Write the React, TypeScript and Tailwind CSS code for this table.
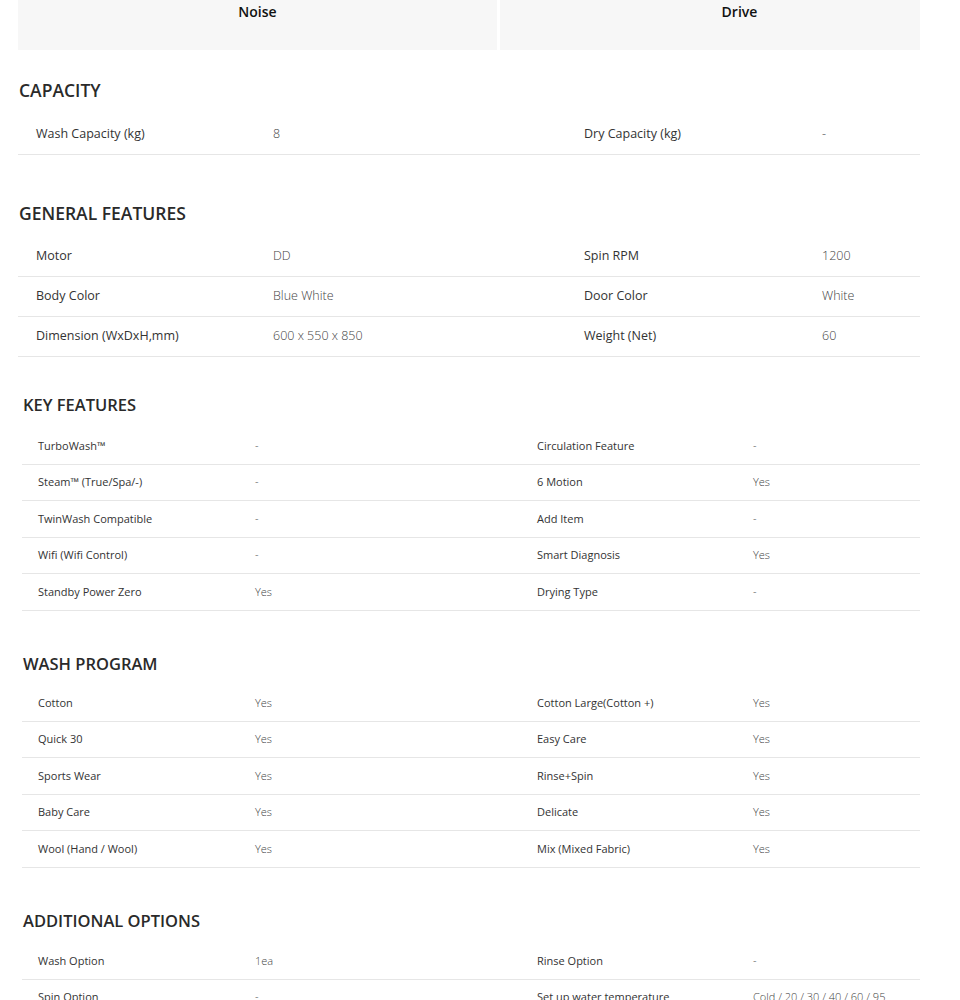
import React from 'react';

type Row = [string, string, string, string];

const capacity: Row[] = [['Wash Capacity (kg)', '8', 'Dry Capacity (kg)', '-']];

const general: Row[] = [
  ['Motor', 'DD', 'Spin RPM', '1200'],
  ['Body Color', 'Blue White', 'Door Color', 'White'],
  ['Dimension (WxDxH,mm)', '600 x 550 x 850', 'Weight (Net)', '60'],
];

const keyFeatures: Row[] = [
  ['TurboWash™', '-', 'Circulation Feature', '-'],
  ['Steam™ (True/Spa/-)', '-', '6 Motion', 'Yes'],
  ['TwinWash Compatible', '-', 'Add Item', '-'],
  ['Wifi (Wifi Control)', '-', 'Smart Diagnosis', 'Yes'],
  ['Standby Power Zero', 'Yes', 'Drying Type', '-'],
];

const washProgram: Row[] = [
  ['Cotton', 'Yes', 'Cotton Large(Cotton +)', 'Yes'],
  ['Quick 30', 'Yes', 'Easy Care', 'Yes'],
  ['Sports Wear', 'Yes', 'Rinse+Spin', 'Yes'],
  ['Baby Care', 'Yes', 'Delicate', 'Yes'],
  ['Wool (Hand / Wool)', 'Yes', 'Mix (Mixed Fabric)', 'Yes'],
];

const additional: Row[] = [
  ['Wash Option', '1ea', 'Rinse Option', '-'],
  ['Spin Option', '-', 'Set up water temperature', 'Cold / 20 / 30 / 40 / 60 / 95'],
];

// upper block (capacity / general) is drawn a touch larger than the rest
function BigTable({ rows }: { rows: Row[] }) {
  return (
    <div>
      {rows.map((r) => (
        <div
          key={r[0]}
          className="grid h-[40px] grid-cols-[255px_311px_238px_1fr] items-center border-b border-[#e6e6e6] text-[12.5px]"
        >
          <span className="pl-[18px] text-[#333]">{r[0]}</span>
          <span className="font-light text-[#444]">{r[1]}</span>
          <span className="text-[#333]">{r[2]}</span>
          <span className="font-light text-[#444]">{r[3]}</span>
        </div>
      ))}
    </div>
  );
}

function SmallTable({ rows }: { rows: Row[] }) {
  return (
    <div>
      {rows.map((r) => (
        <div
          key={r[0]}
          className="grid h-[36.5px] grid-cols-[233px_282px_216px_1fr] items-center border-b border-[#e6e6e6] text-[11px]"
        >
          <span className="pl-[16px] text-[#333]">{r[0]}</span>
          <span className="font-light text-[#444]">{r[1]}</span>
          <span className="text-[#333]">{r[2]}</span>
          <span className="font-light text-[#444]">{r[3]}</span>
        </div>
      ))}
    </div>
  );
}

export default function App() {
  return (
    <div className="h-[1000px] overflow-hidden bg-white font-['Open_Sans',sans-serif]">
      <div className="ml-[18px] w-[902px]">
        <div className="grid h-[50px] grid-cols-[479px_1fr] gap-[3px]">
          <div className="bg-[#f7f7f7] pt-[2px] text-center text-[14px] leading-[20px] font-semibold text-[#111]">
            Noise
          </div>
          <div className="overflow-hidden bg-[#f7f7f7]">
            <div className="w-[479px] pt-[2px] text-center text-[14px] leading-[20px] font-semibold text-[#111]">
              Drive
            </div>
          </div>
        </div>

        <h2 className="mt-[28px] mb-[13px] pl-[1px] text-[17.5px] leading-[24px] font-semibold text-[#2a2a2a]">
          CAPACITY
        </h2>
        <BigTable rows={capacity} />

        <h2 className="mt-[46px] mb-[12px] pl-[1px] text-[17.5px] leading-[24px] font-semibold text-[#2a2a2a]">
          GENERAL FEATURES
        </h2>
        <BigTable rows={general} />
      </div>

      <div className="ml-[22px] w-[898px]">
        <h2 className="mt-[36px] mb-[11px] pl-[1px] text-[16.5px] leading-[24px] font-semibold text-[#2a2a2a]">
          KEY FEATURES
        </h2>
        <SmallTable rows={keyFeatures} />

        <h2 className="mt-[41px] mb-[9.5px] pl-[1px] text-[16.5px] leading-[24px] font-semibold text-[#2a2a2a]">
          WASH PROGRAM
        </h2>
        <SmallTable rows={washProgram} />

        <h2 className="mt-[41px] mb-[10.5px] pl-[1px] text-[16.5px] leading-[24px] font-semibold text-[#2a2a2a]">
          ADDITIONAL OPTIONS
        </h2>
        <SmallTable rows={additional} />
      </div>
    </div>
  );
}
